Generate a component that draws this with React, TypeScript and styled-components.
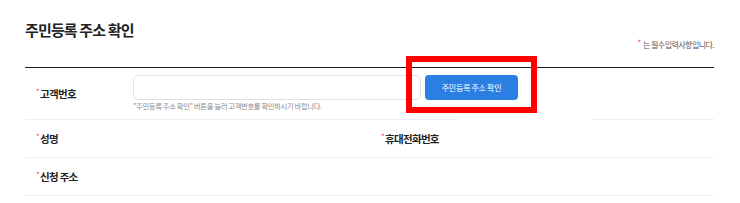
import React from "react";
import styled, { createGlobalStyle } from "styled-components";

const Global = createGlobalStyle`
  html, body { margin: 0; padding: 0; background: #fff; }
  body { font-family: "Noto Sans CJK KR", "Noto Sans", sans-serif; color: #222; }
  * { box-sizing: border-box; }
`;

const Page = styled.div`
  position: relative;
  width: 740px;
  height: 203px;
  padding: 0 26px 0 25px;
  overflow: hidden;
`;

const Header = styled.div`
  display: flex;
  justify-content: space-between;
  align-items: flex-start;
  height: 68px;
  border-bottom: 1px solid #1e1e1e;
`;

const Title = styled.h1`
  margin: 20px 0 0;
  font-size: 15px;
  line-height: 20px;
  font-weight: 700;
  letter-spacing: -0.85px;
  color: #222;
`;

const Note = styled.p`
  margin: 39px 0 0;
  font-size: 8px;
  line-height: 12px;
  letter-spacing: -0.55px;
  color: #555;
`;

const Star = styled.span`
  color: #ec3a63;
  font-size: 8px;
  font-weight: 400;
  margin-right: 1px;
  position: relative;
  top: -2px;
`;

const Row = styled.div<{ $h: number; $gap?: boolean }>`
  display: grid;
  grid-template-columns: 108px 1fr;
  height: ${(p) => p.$h}px;
  padding-bottom: 1px;
  background: ${(p) =>
    p.$gap
      ? "linear-gradient(to right, #efefef 0 433px, transparent 433px 567px, #efefef 567px) bottom / 100% 1px no-repeat"
      : "linear-gradient(#efefef, #efefef) bottom / 100% 1px no-repeat"};
`;

const HalfRow = styled.div<{ $h: number }>`
  display: grid;
  grid-template-columns: 345px 1fr;
  height: ${(p) => p.$h}px;
  padding-bottom: 1px;
  background: linear-gradient(#efefef, #efefef) bottom / 100% 1px no-repeat;
`;

const Label = styled.div`
  display: flex;
  align-items: center;
  padding-left: 11px;
  font-size: 10.5px;
  font-weight: 700;
  letter-spacing: -0.7px;
  color: #222;
`;

const Field = styled.div`
  padding-top: 7px;
`;

const InputLine = styled.div`
  display: flex;
  gap: 4px;
`;

const Input = styled.input`
  width: 288px;
  height: 25px;
  border: 1px solid #e2e2e2;
  border-radius: 5px;
  background: #fff;
  outline: none;
`;

const Button = styled.button`
  width: 93px;
  height: 25px;
  border: 0;
  border-radius: 4px;
  background: #2b7fe2;
  color: #fff;
  font-family: inherit;
  font-size: 8px;
  letter-spacing: -0.3px;
  padding: 0;
`;

const Help = styled.p`
  margin: 2px 0 0;
  font-size: 7.3px;
  line-height: 9px;
  letter-spacing: -0.35px;
  color: #8a8a8a;
`;

const Highlight = styled.div`
  position: absolute;
  left: 406px;
  top: 56px;
  width: 131px;
  height: 57px;
  border: 6px solid #ff0000;
`;

export default function App() {
  return (
    <>
      <Global />
      <Page>
        <Header>
          <Title>주민등록 주소 확인</Title>
          <Note>
            <Star>*</Star> 는 필수입력사항입니다.
          </Note>
        </Header>
        <Row $h={52} $gap>
          <Label>
            <Star>*</Star> 고객번호
          </Label>
          <Field>
            <InputLine>
              <Input />
              <Button>주민등록 주소 확인</Button>
            </InputLine>
            <Help>"주민등록 주소 확인" 버튼을 눌러 고객번호를 확인하시기 바랍니다.</Help>
          </Field>
        </Row>
        <HalfRow $h={38}>
          <Label>
            <Star>*</Star>성명
          </Label>
          <Label>
            <Star>*</Star>휴대전화번호
          </Label>
        </HalfRow>
        <HalfRow $h={38}>
          <Label>
            <Star>*</Star>신청 주소
          </Label>
          <div />
        </HalfRow>
        <Highlight />
      </Page>
    </>
  );
}
